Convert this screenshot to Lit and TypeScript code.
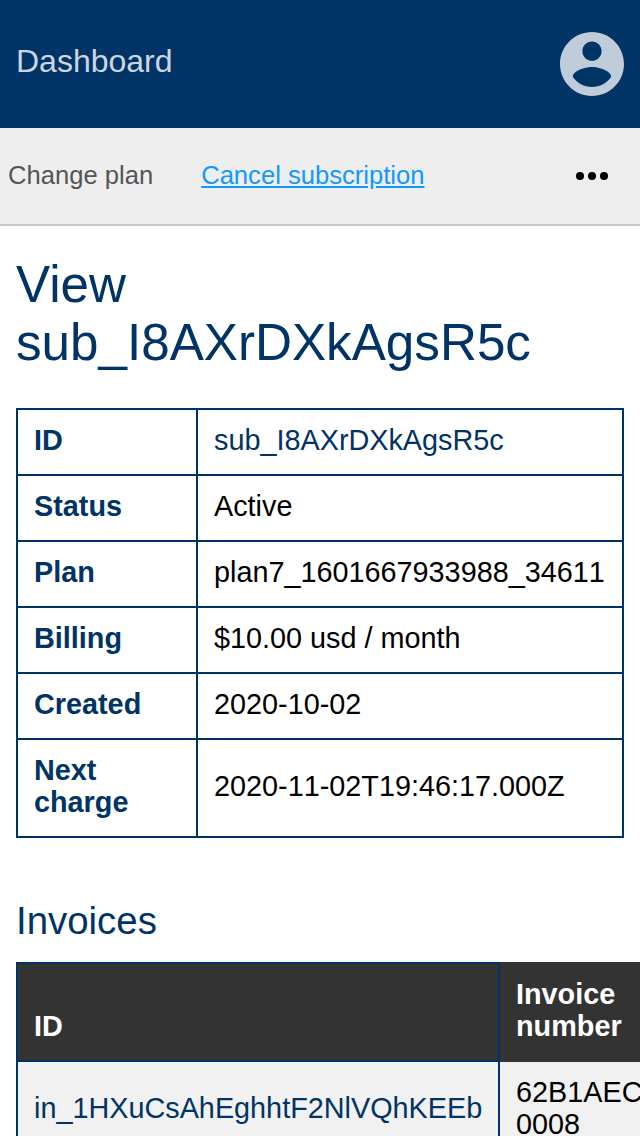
import { LitElement, html, css } from "lit";
import { customElement } from "lit/decorators.js";

const DETAILS: [string, string, boolean][] = [
  ["ID", "sub_I8AXrDXkAgsR5c", true],
  ["Status", "Active", false],
  ["Plan", "plan7_1601667933988_34611", false],
  ["Billing", "$10.00 usd / month", false],
  ["Created", "2020-10-02", false],
  ["Next charge", "2020-11-02T19:46:17.000Z", false],
];

@customElement("app-root")
export class AppRoot extends LitElement {
  static styles = css`
    :host {
      display: block;
      height: 1136px;
      overflow: hidden;
      background: #fff;
      color: #000;
      font-family: "Liberation Sans", Arial, sans-serif;
      font-size: 28.8px;
      line-height: 32px;
    }
    * { box-sizing: border-box; }
    header {
      height: 128px;
      padding: 0 16px;
      background: #003366;
      display: flex;
      align-items: center;
      justify-content: space-between;
    }
    .brand {
      color: #ccd6e0;
      font-size: 32px;
      line-height: 36px;
      padding-bottom: 6px;
    }
    .account { display: block; width: 64px; height: 64px; }
    nav {
      height: 98px;
      border-bottom: 2px solid #c9c9c9;
      background: #eee;
      display: flex;
      align-items: center;
      padding: 0 32px 0 8px;
      gap: 48px;
      font-size: 25.6px;
      color: #555;
    }
    nav span { padding-bottom: 2px; }
    nav .cancel { color: #1199ff; text-decoration: underline; }
    .more { margin-left: auto; display: block; }
    h1, h2 { margin: 0; font-weight: 400; color: #003366; }
    h1 { font-size: 51.2px; line-height: 58px; padding: 30px 16px 36px; }
    h2 { font-size: 38.4px; line-height: 44px; padding: 61px 16px 19px; }
    table { border-collapse: collapse; margin-left: 16px; }
    th, td { border: 2px solid #003366; padding: 14px 16px 18px; text-align: left; }
    td { font-kerning: none; }
    .details { width: 608px; table-layout: fixed; }
    .details th { width: 180px; color: #003366; }
    .link { color: #003366; }
    .invoices { width: 900px; table-layout: fixed; }
    .invoices .id { width: 482px; }
    .invoices th { background: #333; color: #fff; vertical-align: bottom; }
    .invoices .number { border-color: #333; }
    .invoices td { background: #f1f1f1; }
  `;

  render() {
    return html`
      <header>
        <span class="brand">Dashboard</span>
        <svg class="account" viewBox="2 2 20 20">
          <path fill="#bfccd9" d="M12 2C6.48 2 2 6.48 2 12s4.48 10 10 10 10-4.48 10-10S17.52 2 12 2zm0 3c1.66 0 3 1.34 3 3s-1.34 3-3 3-3-1.34-3-3 1.34-3 3-3zm0 14.2c-2.5 0-4.71-1.28-6-3.22.03-1.99 4-3.08 6-3.08 1.99 0 5.97 1.09 6 3.08-1.29 1.94-3.5 3.22-6 3.22z"/>
        </svg>
      </header>
      <nav>
        <span>Change plan</span>
        <span class="cancel">Cancel subscription</span>
        <svg class="more" width="32" height="10" viewBox="0 0 32 10">
          <circle cx="4" cy="5" r="4"/><circle cx="16" cy="5" r="4"/><circle cx="28" cy="5" r="4"/>
        </svg>
      </nav>
      <h1>View<br />sub_I8AXrDXkAgsR5c</h1>
      <table class="details">
        ${DETAILS.map(([k, v, link]) => html`<tr><th>${k}</th><td class=${link ? "link" : ""}>${v}</td></tr>`)}
      </table>
      <h2>Invoices</h2>
      <table class="invoices">
        <tr><th class="id">ID</th><th class="number">Invoice<br />number</th></tr>
        <tr><td class="link">in_1HXuCsAhEghhtF2NlVQhKEEb</td><td>62B1AECA-<br />0008</td></tr>
      </table>
    `;
  }
}
